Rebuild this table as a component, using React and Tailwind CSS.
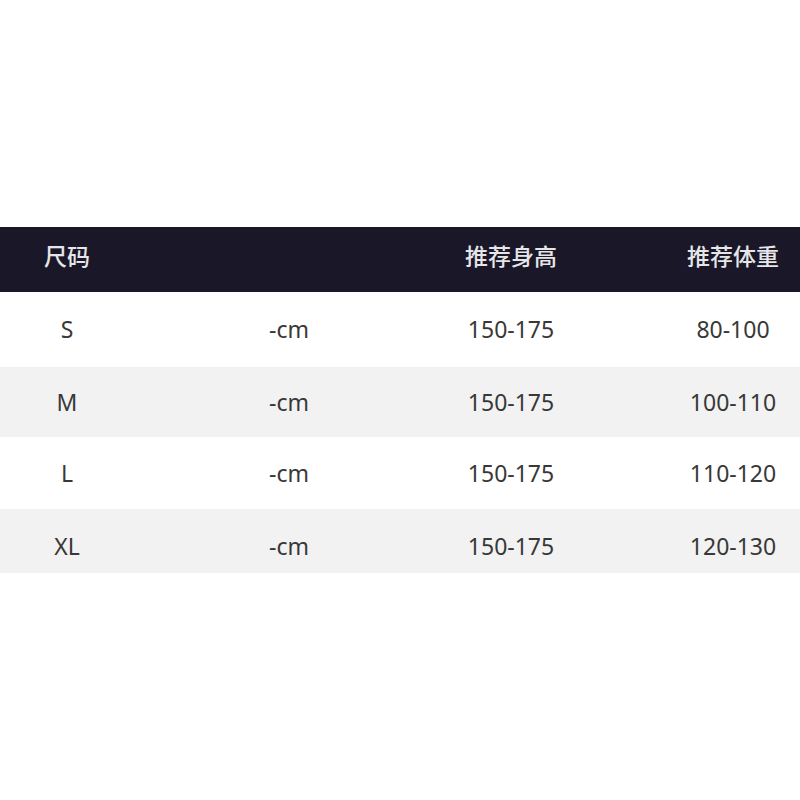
const rows = [
  { size: 'S', chest: '-cm', height: '150-175', weight: '80-100', h: 'h-[75px]', bg: 'bg-white' },
  { size: 'M', chest: '-cm', height: '150-175', weight: '100-110', h: 'h-[70px]', bg: 'bg-[#f2f2f2]' },
  { size: 'L', chest: '-cm', height: '150-175', weight: '110-120', h: 'h-[72px]', bg: 'bg-white' },
  { size: 'XL', chest: '-cm', height: '150-175', weight: '120-130', h: 'h-[64px] pt-[10px]', bg: 'bg-[#f2f2f2]' },
];

const cols = 'grid grid-cols-[134px_310px_134px_1fr] items-center';

export default function App() {
  return (
    <div
      className="w-[800px] h-[800px] bg-white overflow-hidden pt-[227px]"
      style={{ fontFamily: '"Noto Sans", "Noto Sans CJK SC", sans-serif' }}
    >
      <div className={`${cols} h-[65px] bg-[#1a1828] text-[#e6e6e8] text-[23px] font-medium pb-[6px]`}>
        <div className="text-center">尺码</div>
        <div />
        <div className="text-center whitespace-nowrap">推荐身高</div>
        <div className="pl-[88px] whitespace-nowrap">
          <div className="w-[134px] text-center">推荐体重</div>
        </div>
      </div>
      {rows.map((r) => (
        <div key={r.size} className={`${cols} ${r.h} ${r.bg} text-[#383838] text-[23px]`}>
          <div className="text-center">{r.size}</div>
          <div className="text-center">{r.chest}</div>
          <div className="text-center">{r.height}</div>
          <div className="pl-[88px]">
            <div className="w-[134px] text-center whitespace-nowrap">{r.weight}</div>
          </div>
        </div>
      ))}
    </div>
  );
}
